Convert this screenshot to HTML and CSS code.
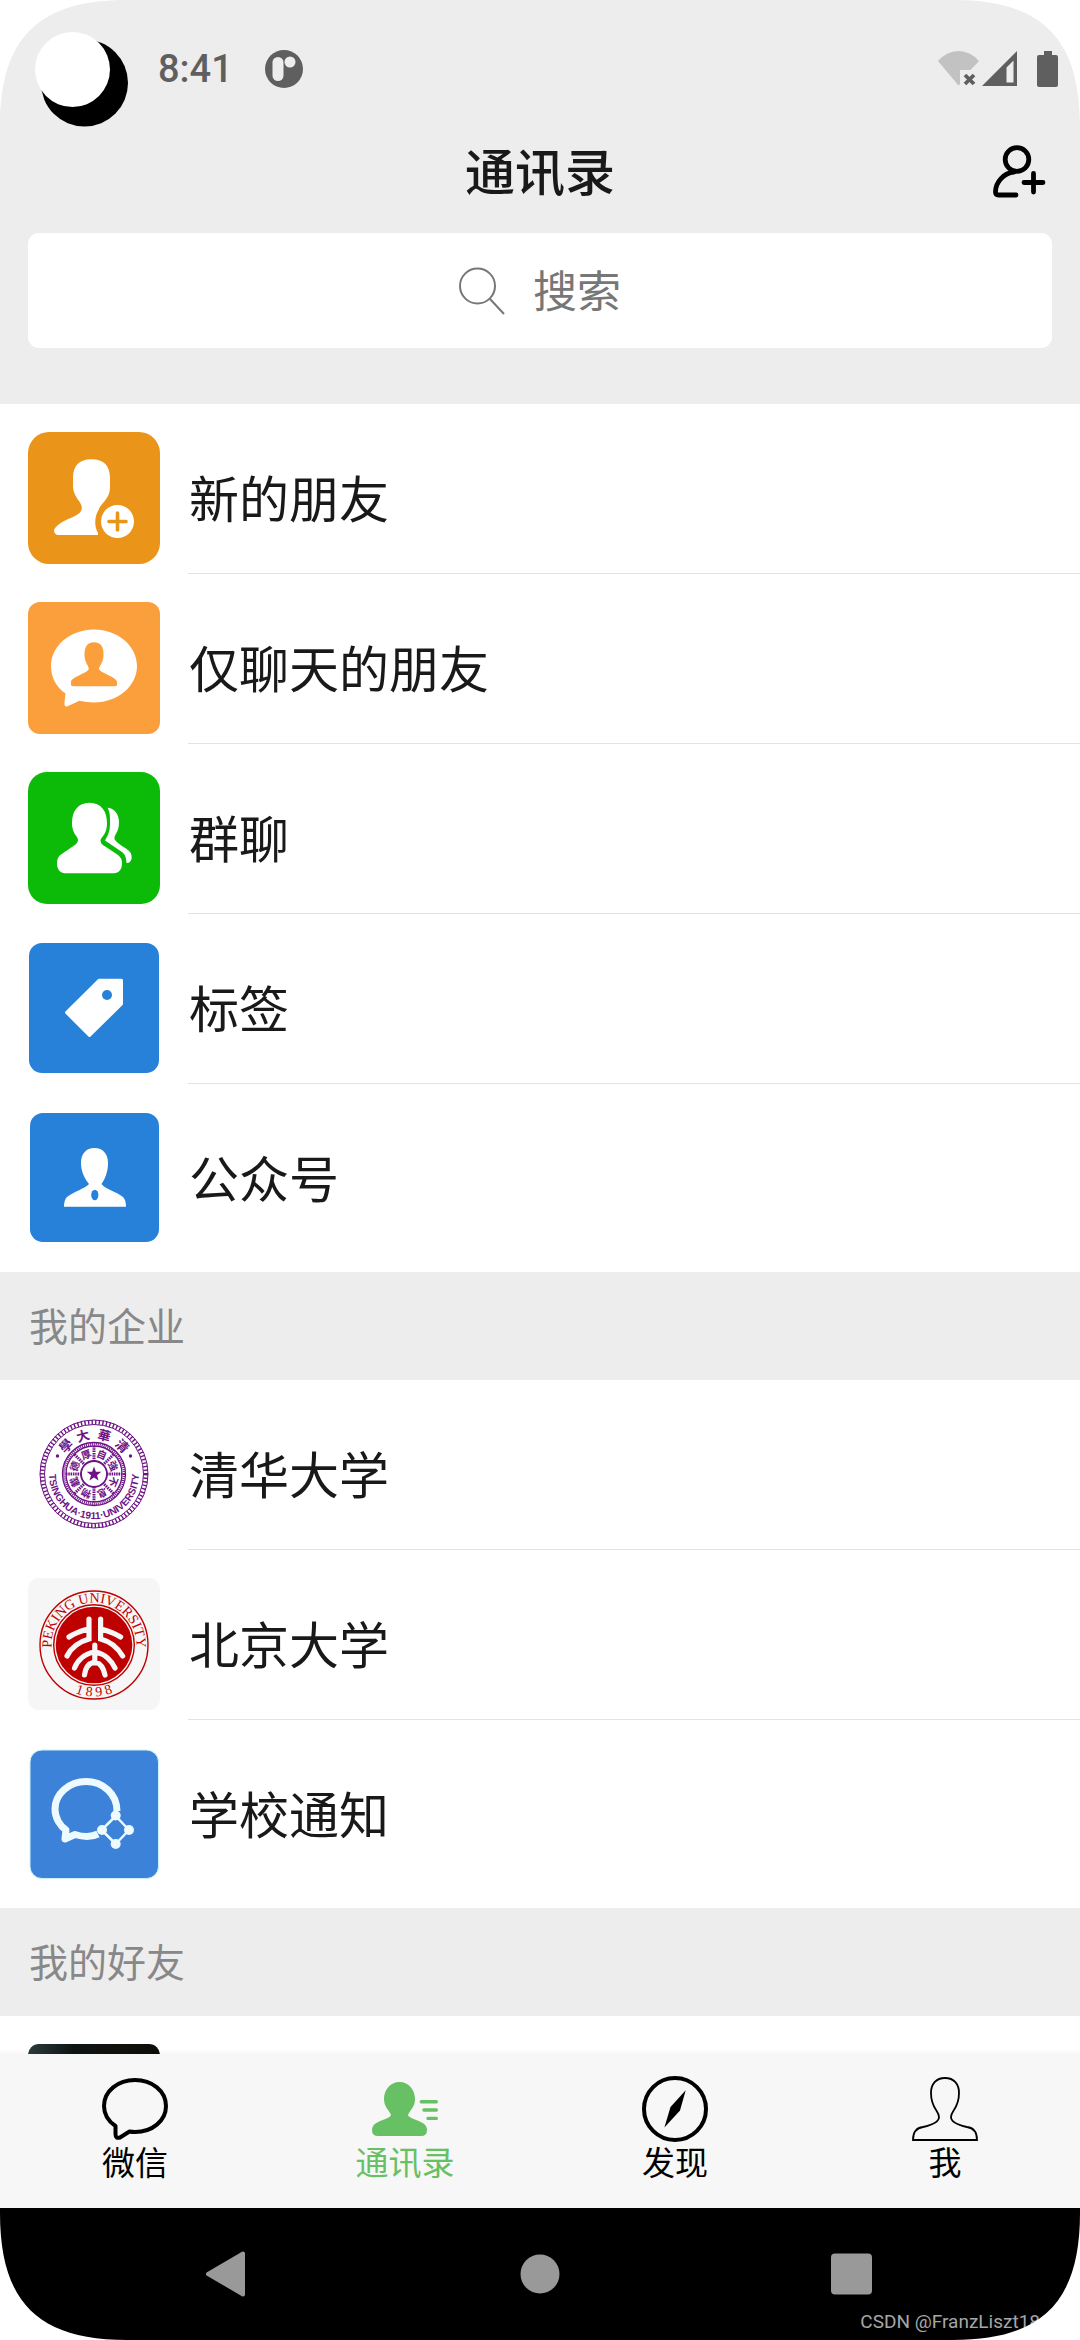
FILE: index.html
```html
<!DOCTYPE html>
<html lang="zh-CN">
<head>
<meta charset="utf-8">
<meta name="viewport" content="width=device-width, initial-scale=1">
<title>通讯录</title>
<link rel="stylesheet" href="styles.css">
</head>
<body>
<div class="phone">
  <header class="top">
    <div class="status">
      <svg class="cutout" viewBox="0 0 130 138" aria-hidden="true"><circle cx="84.500" cy="83" r="43.500"/><circle cx="72.500" cy="69.500" r="37.500" fill="#fff"/></svg>
      <span class="time">8:41</span>
      <svg class="app-dot" viewBox="0 0 38 38" aria-hidden="true"><circle cx="19" cy="19" r="19" fill="#5f5f5f"/><rect x="7.500" y="7" width="11" height="24" rx="5.500" fill="#ededed"/><circle cx="25" cy="12" r="5.500" fill="#ededed"/></svg>
      <div class="signals">
        <svg class="wifi" viewBox="0 0 42 38" aria-hidden="true"><path d="M0 11Q9 1 20.500 1T41 11L32.500 20H22V34L20.500 35.500Z" fill="#c2c2c2"/><path d="M27 25l9 9M36 25l-9 9" stroke="#5f5f5f" stroke-width="3.800"/></svg>
        <svg class="cell" viewBox="0 0 36 38" aria-hidden="true"><path fill="#5f5f5f" fill-rule="evenodd" d="M0 36L35 1V36ZM24.500 17.500V32.500H31.500V10.500Z"/></svg>
        <svg class="battery" viewBox="0 0 22 38" aria-hidden="true"><path fill="#5f5f5f" d="M7 1h8v4h4q2 0 2 2v28q0 2-2 2H2q-2 0-2-2V7q0-2 2-2h5z"/></svg>
      </div>
    </div>
    <div class="title-row">
      <h1 class="title">通讯录</h1>
      <button class="add" type="button" aria-label="添加朋友">
        <svg viewBox="0 0 60 60" fill="none" stroke="#000" stroke-width="4.800" stroke-linecap="round" stroke-linejoin="round" aria-hidden="true"><circle cx="27" cy="17.500" r="11.800"/><path d="M24 30C14 31 5.500 40 5.500 50Q5.500 53 8.500 53H26M34 40.500H53M43.500 31.500V50"/></svg>
      </button>
    </div>
    <label class="search">
      <svg class="search-icon" viewBox="0 0 46 48" fill="none" stroke="#777" stroke-width="2" aria-hidden="true"><circle cx="18.500" cy="19" r="17.500"/><path d="M31 32L45 47"/></svg>
      <input class="search-input" type="text" placeholder="搜索" aria-label="搜索">
    </label>
  </header>

  <main class="list">
    <ul class="group">
      <li><a class="row" href="#new">
        <svg class="tile" viewBox="0 0 132 132" aria-hidden="true"><rect width="132" height="132" rx="21" fill="#ea951a"/><path fill="#fff" d="M63.500 27.300C51 27.300 45 34 45 46V54C45 60 48 65 51 69C54 73.500 54.500 76 53 79C51 83 44 85 38 88C30 92 26 96 26 99Q27 103 30 103H70V101C66 94 67 86 69 81C71 77 72 74 75 71C80 65 82 62 82 54V46C82 34 76 27.300 63.500 27.300Z"/><circle cx="89.500" cy="89.500" r="16.500" fill="#fff"/><path d="M81 89.500H98M89.500 81V98" stroke="#ea951a" stroke-width="3.600" stroke-linecap="round"/></svg>
        <span class="name">新的朋友</span></a></li>
      <li><a class="row" href="#chat-only">
        <svg class="tile" viewBox="0 0 132 132" aria-hidden="true"><rect width="132" height="132" rx="12" fill="#fb9f3c"/><path fill="#fff" d="M66 27.500C90 27.500 109 44 109 64S90 100.500 66 100.500Q58 100.500 51.500 98.700L39 104.500Q36 105 36.500 100L37.500 91.500C28 85 23 75 23 64C23 44 42 27.500 66 27.500Z"/><path fill="#fb9f3c" d="M66 40.300C59 40.300 56.300 45 56.500 54C57 61 60.500 63 60.800 67C60 71 43 75 43 80V83Q43 84.300 46 84.300H86Q89 84.300 89 83V80C89 75 72 71 71 67C71.500 63 75 61 75.500 54C76 45 73 40.300 66 40.300Z"/></svg>
        <span class="name">仅聊天的朋友</span></a></li>
      <li><a class="row" href="#groups">
        <svg class="tile" viewBox="0 0 132 132" aria-hidden="true"><rect width="132" height="132" rx="19" fill="#0bbb08"/><path fill="#fff" d="M61.500 30.700C50 30.700 44 39 44 51C44 62 50 64 50 68C50 71 47 73 44 75L33 82.500Q29 85 29 91C29 98 32 101.300 39 101.300H84C91 101.300 94 98 94 91Q94 86 90 83L78 75C75 73 72.500 72 72.500 68C74 64 79 62 79 51C79 39 73 30.700 61.500 30.700ZM79.500 35.700C86 36 91 42 91 50C91 61 86 62 86.500 67C88 70 94 74 98 76.500Q104 80 103.700 86Q103 91 98.500 91C98 84 97 82 92.500 79L77 68.500C80 63 82 60 82 51C82 44 82 40 79.500 35.700Z"/></svg>
        <span class="name">群聊</span></a></li>
      <li><a class="row" href="#tags">
        <svg class="tile" viewBox="0 0 132 132" aria-hidden="true"><rect x="1" y="1" width="130" height="130" rx="13" fill="#2781d9"/><path fill="#fff" stroke="#fff" stroke-width="3" stroke-linejoin="round" d="M71 38.200H93.500V62L61.500 93.500L38.500 70.500Z"/><circle cx="79" cy="53" r="5" fill="#2781d9"/></svg>
        <span class="name">标签</span></a></li>
      <li><a class="row" href="#official">
        <svg class="tile" viewBox="0 0 132 132" aria-hidden="true"><rect x="2" y="1" width="129" height="129" rx="13" fill="#2781d9"/><path fill="#fff" d="M66.500 36C58 36 53 42 53 51C53 60 57 67 61 72C58 76 45 80 39 85Q36 88 36 94.700H98Q98 88 95 85C89 80 77 77 73.500 72C77 67 80 60 80 51C80 42 75 36 66.500 36Z"/><ellipse cx="66.800" cy="83" rx="3.600" ry="5.200" fill="#2781d9"/></svg>
        <span class="name">公众号</span></a></li>
    </ul>

    <h2 class="section">我的企业</h2>
    <ul class="group">
      <li><a class="row" href="#tsinghua">
        <svg class="tile" viewBox="0 0 132 132" aria-hidden="true">
          <defs>
            <path id="thu-low" d="M26 45.500A45 45 0 1 0 106 45.500"/>
          </defs>
          <g fill="none" stroke="#6d1385"><circle cx="66" cy="66" r="54"/><circle cx="66" cy="66" r="49.500"/><circle cx="66" cy="66" r="51.800" stroke-width="4.500" stroke-dasharray="1.400 2.200"/><circle cx="66" cy="66" r="31.500" stroke-width="1.300"/><circle cx="66" cy="66" r="28" stroke-width="1.300"/><circle cx="66" cy="66" r="29.800" stroke-width="2.500" stroke-dasharray="1 1"/><circle cx="66" cy="66" r="13" stroke-width="1.800"/>
          <path stroke-width="3" stroke-dasharray="1.500 .8" d="M66 38V53M66 79V94M38 66H53M79 66H94M46.500 46.500L57 57M85.500 85.500L75 75M46.500 85.500L57 75M85.500 46.500L75 57"/></g>
          <g fill="#6d1385"><path d="M66 58.500L67.900 63.700L73.300 63.800L69 67.200L70.500 72.500L66 69.400L61.500 72.500L63 67.200L58.700 63.800L64.100 63.700Z"/><circle cx="29.500" cy="48" r="1.700"/><circle cx="102.500" cy="48" r="1.700"/>
          <g class="thu-inner">
            <text x="66" y="49" transform="rotate(22 66 66)">自</text><text x="66" y="49" transform="rotate(67 66 66)">強</text><text x="66" y="49" transform="rotate(112 66 66)">不</text><text x="66" y="49" transform="rotate(157 66 66)">息</text>
            <text x="66" y="49" transform="rotate(202 66 66)">物</text><text x="66" y="49" transform="rotate(247 66 66)">載</text><text x="66" y="49" transform="rotate(292 66 66)">德</text><text x="66" y="49" transform="rotate(338 66 66)">厚</text>
          </g>
          <g class="thu-top"><text x="66" y="31" transform="rotate(-45 66 66)">學</text><text x="66" y="31" transform="rotate(-16 66 66)">大</text><text x="66" y="31" transform="rotate(15 66 66)">華</text><text x="66" y="31" transform="rotate(45 66 66)">清</text></g>
          <text class="thu-en"><textPath href="#thu-low" startOffset="50%">TSINGHUA·1911·UNIVERSITY</textPath></text></g>
        </svg>
        <span class="name">清华大学</span></a></li>
      <li><a class="row" href="#pku">
        <svg class="tile" viewBox="0 0 132 132" aria-hidden="true">
          <defs><path id="pku-high" d="M32 92.500A42.500 42.500 0 1 1 100 92.500"/><path id="pku-low" d="M24 96A50.500 50.500 0 0 0 108 96"/></defs>
          <rect width="132" height="132" rx="11" fill="#f6f6f6"/>
          <g fill="none" stroke="#bf0000" stroke-width="1.400"><circle cx="66" cy="67" r="54"/><circle cx="66" cy="67" r="40.300"/></g><circle cx="66" cy="67" r="38.300" fill="#bf0000"/>
          <g fill="none" stroke="#f6f6f6" stroke-width="5.200" stroke-linecap="round"><path d="M61 41V61C50 64 43 70 39 78M41 59C47 55 53 53 60 51M72.600 41V61C84 64 90 70 94.600 78M92.600 59C86 55 80 53 73 51M66.800 67V85M66 74C56 76 49 83 46.500 90M67.600 74C77 76 84 83 87 90M66 84C59 86 57 92 56.500 97M67.600 84C74 86 76 92 77 97"/></g>
          <text class="pku-text" fill="#bf0000"><textPath href="#pku-high" startOffset="50%">PEKING UNIVERSITY</textPath></text>
          <text class="pku-text" fill="#bf0000"><textPath href="#pku-low" startOffset="50%">1 8 9 8</textPath></text>
        </svg>
        <span class="name">北京大学</span></a></li>
      <li><a class="row" href="#notice">
        <svg class="tile" viewBox="0 0 132 132" aria-hidden="true"><rect x="2" y="2" width="128.500" height="128.500" rx="12" fill="#3b82d8" stroke="#c9f2fb" stroke-width="1"/><g fill="none" stroke="#edfaff" stroke-linejoin="round"><path stroke-width="7" d="M89 63C89 46 75 33.500 58 33.500S27 46 27 61C27 70 32 78 38 82L37 91L47 86.500C55 89 64 89 70 86"/><path stroke-width="2.500" d="M87.700 68L73.700 82L87.700 96L101 82Z"/></g><g fill="#edfaff"><circle cx="87.700" cy="67.500" r="5"/><circle cx="74" cy="82" r="5"/><circle cx="101" cy="82" r="5"/><circle cx="87.700" cy="96" r="5"/></g></svg>
        <span class="name">学校通知</span></a></li>
    </ul>

    <h2 class="section">我的好友</h2>
    <ul class="group">
      <li><a class="row" href="#friend" aria-label="好友"><span class="tile photo"></span></a></li>
    </ul>
  </main>

  <nav class="tabs" aria-label="主导航">
    <a class="tab" href="#wechat"><svg class="tab-icon" viewBox="0 0 66 66" fill="none" stroke="#000" stroke-width="4" stroke-linejoin="round" aria-hidden="true"><path d="M33 4C50 4 64 15 64 30S50 56 33 56Q30 56 27.500 55.500L18 61.500Q13.500 63 13.500 58V50C6 45 2 38 2 30C2 15 16 4 33 4Z"/></svg>微信</a>
    <a class="tab active" href="#contacts" aria-current="page"><svg class="tab-icon" viewBox="0 0 66 66" fill="currentColor" aria-hidden="true"><path d="M27.500 6C18 6 12 14 12 23C12 31 17 34 19 39C19 42 9 44 3.500 47.500Q0 50 0 54Q0 60 6 60H49Q55 60 55 54Q55 50 51.500 47.500C46 44 36 42 36 39C38 34 43 31 43 23C43 14 37 6 27.500 6Z"/><path stroke="currentColor" stroke-width="3.400" stroke-linecap="round" d="M49.300 25.700H64.300M52 34H64.300M56 42.400H64.300"/></svg>通讯录</a>
    <a class="tab" href="#discover"><svg class="tab-icon" viewBox="0 0 66 66" aria-hidden="true"><circle cx="33" cy="33" r="31" fill="none" stroke="#000" stroke-width="4"/><path d="M43.700 14.300L38 34.500L22.400 51.500L28.500 31Z"/></svg>发现</a>
    <a class="tab" href="#me"><svg class="tab-icon" viewBox="0 0 66 66" fill="none" stroke="#000" stroke-width="1.800" aria-hidden="true"><path d="M33 2C24 2 19 8 19 17C19 33 27 34 27 41C27 46 20 49 11 51C3 52 1 57 1 64H65C65 57 63 52 55 51C46 49 39 46 39 41C39 34 47 33 47 17C47 8 42 2 33 2Z"/></svg>我</a>
  </nav>

  <div class="system">
    <button type="button" aria-label="返回"><svg viewBox="0 0 46 46" aria-hidden="true"><path fill="#999" stroke="#999" stroke-width="4" stroke-linejoin="round" d="M3 23L38 2.500V43.500Z"/></svg></button>
    <button type="button" aria-label="主屏幕"><svg viewBox="0 0 46 46" aria-hidden="true"><circle cx="23" cy="23" r="19.500" fill="#999"/></svg></button>
    <button type="button" aria-label="最近任务"><svg viewBox="0 0 46 46" aria-hidden="true"><rect x="2" y="2.500" width="41" height="41" rx="4" fill="#999"/></svg></button>
    <span class="credit">CSDN @FranzLiszt18</span>
  </div>

  <svg class="corner tl" viewBox="0 0 127 127" aria-hidden="true"><path fill="#fff" d="M0 0H127C38 0 0 38 0 127Z"/></svg>
  <svg class="corner tr" viewBox="0 0 127 127" aria-hidden="true"><path fill="#fff" d="M127 0V127C127 38 89 0 0 0Z"/></svg>
  <svg class="corner bl" viewBox="0 0 127 127" aria-hidden="true"><path fill="#fff" d="M0 127V0C0 89 38 127 127 127Z"/></svg>
  <svg class="corner br" viewBox="0 0 127 127" aria-hidden="true"><path fill="#fff" d="M127 127H0C89 127 127 89 127 0Z"/></svg>
</div>
</body>
</html>
```
FILE: styles.css
```css
* { box-sizing: border-box; }

body {
  margin: 0;
  background: #fff;
  font-family: "Noto Sans CJK SC", sans-serif;
  color: #191919;
}

a { color: inherit; text-decoration: none; }

button {
  padding: 0;
  border: 0;
  background: none;
}

svg { display: block; flex: none; }

.phone {
  position: relative;
  display: flex;
  flex-direction: column;
  height: 100vh;
  overflow: hidden;
}

/* Header */
.top {
  flex: none;
  padding-bottom: 56px;
  background: #ededed;
}

.status {
  display: flex;
  align-items: center;
  height: 138px;
  padding-right: 21px;
}

.cutout { width: 130px; height: 138px; }

.time {
  margin: 0 32px 0 28px;
  font: 500 38px/48px Roboto, sans-serif;
  color: #5f5f5f;
}

.app-dot { width: 38px; height: 38px; }

.signals {
  display: flex;
  gap: 2px;
  margin-left: auto;
}

.wifi { width: 42px; height: 38px; }
.cell { width: 36px; height: 38px; }
.battery { width: 22px; height: 38px; margin-left: 17px; }

.title-row {
  display: grid;
  grid-template-columns: 1fr auto 1fr;
  align-items: center;
  height: 68px;
  padding: 0 30px;
}

.title {
  grid-column: 2;
  margin: 0;
  padding-bottom: 6px;
  font-size: 50px;
  font-weight: 500;
  line-height: 62px;
}

.add {
  justify-self: end;
  width: 60px;
  height: 60px;
}

.search {
  display: flex;
  align-items: center;
  justify-content: center;
  gap: 28px;
  height: 115px;
  margin: 27px 28px 0;
  border-radius: 11px;
  background: #fff;
}

.search-icon { width: 46px; height: 48px; }

.search-input {
  width: 88px;
  height: 68px;
  padding: 0 0 4px;
  border: 0;
  outline: 0;
  background: none;
  font: 44px/64px "Noto Sans CJK SC", sans-serif;
  color: #191919;
}

.search-input::placeholder { color: #777; opacity: 1; }

/* Contact list */
.list {
  flex: 1;
  min-height: 0;
  overflow: hidden;
  background: linear-gradient(to top, #f8f8f8, #fff 5px);
}

.group {
  margin: 0;
  padding: 0 0 18px;
  list-style: none;
}

.row {
  position: relative;
  display: flex;
  gap: 29px;
  height: 170px;
  padding: 28px 0 0 28px;
}

.group li:not(:last-child) .row::after {
  content: "";
  position: absolute;
  right: 0;
  bottom: 0;
  left: 188px;
  height: 1px;
  background: #e3e3e3;
}

.tile {
  width: 132px;
  height: 132px;
}

.photo {
  border-radius: 11px;
  background: linear-gradient(100deg, #2b3c3c, #0e1414 30%, #12110c 60%, #080b05);
}

.name {
  font-size: 50px;
  line-height: 128px;
}

.section {
  margin: 0;
  padding: 0 29px 4px;
  background: #ededed;
  font-size: 39px;
  font-weight: 400;
  line-height: 104px;
  color: #888;
}

/* Seal lettering */
.thu-inner { font-size: 10px; font-weight: 700; text-anchor: middle; }
.thu-top { font-size: 13px; font-weight: 700; text-anchor: middle; }
.thu-en { font: 700 10px "Liberation Sans", sans-serif; text-anchor: middle; }
.pku-text { font: 14px "Liberation Serif", serif; text-anchor: middle; }

/* Bottom tabs */
.tabs {
  flex: none;
  display: grid;
  grid-template-columns: repeat(4, 1fr);
  height: 154px;
  padding-top: 22px;
  background: #f7f7f7;
}

.tab {
  display: flex;
  flex-direction: column;
  align-items: center;
  font-size: 33px;
  line-height: 38px;
  color: #000;
}

.tab.active { color: #67c064; }

.tab-icon { width: 66px; height: 66px; }

/* Device navigation */
.system {
  position: relative;
  flex: none;
  display: grid;
  grid-template-columns: repeat(3, 312px);
  justify-content: center;
  justify-items: center;
  align-items: center;
  height: 132px;
  background: #000;
}

.system svg { width: 46px; height: 46px; }

.credit {
  position: absolute;
  right: 40px;
  bottom: 6px;
  font: 19px/24px Roboto, sans-serif;
  color: #a6a6a6;
}

.corner {
  position: absolute;
  width: 127px;
  height: 127px;
  pointer-events: none;
}

.tl { top: 0; left: 0; }
.tr { top: 0; right: 0; }
.bl { bottom: 0; left: 0; }
.br { right: 0; bottom: 0; }
```
